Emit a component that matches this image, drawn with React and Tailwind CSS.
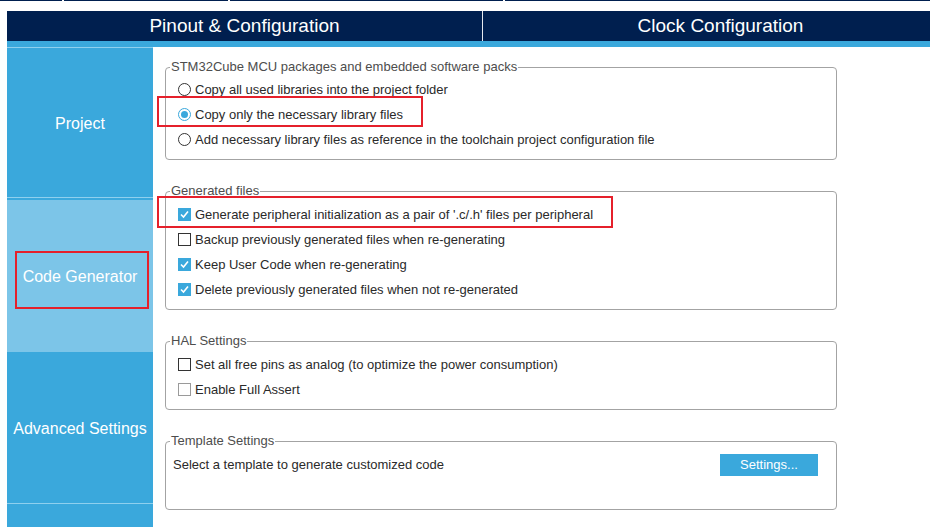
import React from "react";

const NAVY = "bg-[#001f4f]";

function Radio({ checked }) {
  return (
    <span
      className={
        "w-[13px] h-[13px] rounded-full border flex items-center justify-center bg-white shrink-0 " +
        (checked ? "border-[#3aa8dc]" : "border-[#333333]")
      }
    >
      {checked && <span className="w-[7px] h-[7px] rounded-full bg-[#3aa8dc]" />}
    </span>
  );
}

function Check({ checked, light }) {
  if (checked) {
    return (
      <span className="w-[13px] h-[13px] bg-[#3aa8dc] flex items-center justify-center shrink-0">
        <svg width="11" height="11" viewBox="0 0 11 11">
          <path d="M2 5.5 L4.5 8 L9 2.5" fill="none" stroke="white" strokeWidth="1.6" />
        </svg>
      </span>
    );
  }
  return (
    <span
      className={
        "w-[13px] h-[13px] border bg-white shrink-0 " +
        (light ? "border-[#9a9a9a]" : "border-[#333333]")
      }
    />
  );
}

function Row({ children, control }) {
  return (
    <div className="h-[25px] flex items-center gap-[4px] pl-[12px] text-[13px] text-[#2a2a2a]">
      {control}
      <span>{children}</span>
    </div>
  );
}

function Group({ title, height, first, children, pt = "pt-[10px]" }) {
  return (
    <div
      className={
        "relative border border-[#a3a3a3] rounded-[4px] w-[672px] " +
        height +
        " " +
        pt +
        " " +
        (first ? "mt-[20px]" : "mt-[31px]")
      }
    >
      <span className="absolute left-[4px] -top-[9px] bg-white px-[1px] text-[13px] leading-[16px] text-[#4d4d4d]">
        {title}
      </span>
      {children}
    </div>
  );
}

export default function App() {
  return (
    <div className="relative w-[930px] h-[527px] overflow-hidden bg-white font-['Liberation_Sans',Arial,sans-serif]">
      {/* thin top border */}
      <div className="flex h-[1px] gap-[2px]">
        <div className={"w-[62px] " + NAVY} />
        <div className={"w-[164px] " + NAVY} />
        <div className={"w-[273px] " + NAVY} />
        <div className={"flex-1 " + NAVY} />
      </div>

      {/* tab header */}
      <div className={"mt-[10px] ml-[7px] h-[30px] flex w-[951px] " + NAVY}>
        <div className="w-[475px] flex items-center justify-center pt-[1px] text-white text-[19px]">
          Pinout &amp; Configuration
        </div>
        <div className="w-px bg-[#e6e9ef]" />
        <div className="flex-1 flex items-center justify-center pt-[1px] text-white text-[19px]">
          Clock Configuration
        </div>
      </div>
      <div className="ml-[7px] h-[6px] bg-[#3aa8dc]" />

      <div className="flex">
        {/* sidebar */}
        <div className="ml-[7px] w-[146px] h-[480px] bg-[#3aa8dc] flex flex-col text-white text-[16px]">
          <div className="h-px bg-[#8fd0ee]" />
          <div className="h-[149px] flex items-center justify-center pt-[2px]">Project</div>
          <div className="h-px bg-[#8fd0ee]" />
          <div className="h-[2px]" />
          <div className="h-[152px] bg-[#7cc5e8] flex items-center justify-center pt-[2px]">Code Generator</div>
          <div className="h-[151px] flex items-center justify-center pt-[3px]">Advanced Settings</div>
          <div className="h-px bg-[#8fd0ee]" />
          <div className="flex-1" />
        </div>

        {/* content */}
        <div className="ml-[12px] flex flex-col">
          <Group title="STM32Cube MCU packages and embedded software packs" height="h-[93px]" pt="pt-[9px]" first>
            <Row control={<Radio />}>Copy all used libraries into the project folder</Row>
            <Row control={<Radio checked />}>Copy only the necessary library files</Row>
            <Row control={<Radio />}>
              Add necessary library files as reference in the toolchain project configuration file
            </Row>
          </Group>

          <Group title="Generated files" height="h-[119px]">
            <Row control={<Check checked />}>
              Generate peripheral initialization as a pair of '.c/.h' files per peripheral
            </Row>
            <Row control={<Check />}>Backup previously generated files when re-generating</Row>
            <Row control={<Check checked />}>Keep User Code when re-generating</Row>
            <Row control={<Check checked />}>Delete previously generated files when not re-generated</Row>
          </Group>

          <Group title="HAL Settings" height="h-[69px]">
            <Row control={<Check />}>Set all free pins as analog (to optimize the power consumption)</Row>
            <Row control={<Check light />}>Enable Full Assert</Row>
          </Group>

          <Group title="Template Settings" height="h-[69px]">
            <div className="h-[25px] flex items-center justify-between pl-[7px] pr-[18px] text-[13px] text-[#2a2a2a]">
              <span>Select a template to generate customized code</span>
              <button className="w-[98px] h-[22px] bg-[#3aa8dc] text-white text-[13px]">Settings...</button>
            </div>
          </Group>
        </div>
      </div>

      {/* red annotation boxes */}
      <div className="absolute left-[157px] top-[96px] w-[266px] h-[31px] border-2 border-[#e5202b]" />
      <div className="absolute left-[157px] top-[196px] w-[456px] h-[32px] border-2 border-[#e5202b]" />
      <div className="absolute left-[15px] top-[251px] w-[134px] h-[58px] border-2 border-[#e5202b]" />
    </div>
  );
}
